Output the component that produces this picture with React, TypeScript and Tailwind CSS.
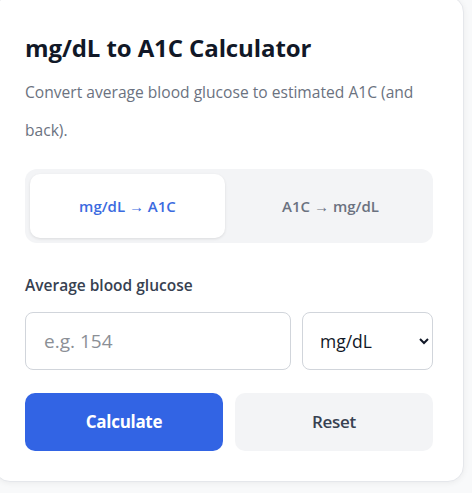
import { useState } from "react";

type Mode = "toA1c" | "toMgdl";

export default function App() {
  const [mode, setMode] = useState<Mode>("toA1c");
  const [value, setValue] = useState("");
  const [unit, setUnit] = useState("mg/dL");

  return (
    <div className="min-h-screen overflow-hidden bg-[#f8f9fa] font-['Open_Sans',sans-serif]">
      <div className="-ml-[6px] -mt-[4px] w-[470px] rounded-2xl border border-[#e5e7eb] bg-white px-[30px] pb-[30px] pt-[35px] shadow-[0_1px_6px_rgba(0,0,0,0.06)]">
        <h1 className="text-[24px] font-bold leading-[32px] tracking-[-0.1px] text-[#111827]">mg/dL to A1C Calculator</h1>
        <p className="mt-[9px] text-[15.6px] leading-[38px] text-[#6b7280]">
          Convert average blood glucose to estimated A1C (and back).
        </p>

        <div className="mt-[20px] grid grid-cols-2 gap-[8px] rounded-xl bg-[#f3f4f6] p-[5px]">
          <TabButton active={mode === "toA1c"} onClick={() => setMode("toA1c")}>
            mg/dL → A1C
          </TabButton>
          <TabButton active={mode === "toMgdl"} onClick={() => setMode("toMgdl")}>
            A1C → mg/dL
          </TabButton>
        </div>

        <label className="mt-[31px] block text-[15.5px] font-semibold leading-[22px] text-[#374151]">
          Average blood glucose
        </label>
        <div className="mt-[16px] flex gap-[11px]">
          <input
            value={value}
            onChange={(event) => setValue(event.target.value)}
            placeholder="e.g. 154"
            className="h-[58px] w-[266px] rounded-lg border border-[#d1d5db] bg-white px-[18px] text-[19px] text-[#111827] outline-none placeholder:text-[#8b8f96]"
          />
          <select
            value={unit}
            onChange={(event) => setUnit(event.target.value)}
            className="h-[58px] flex-1 rounded-lg border border-[#d1d5db] bg-white pl-[13px] pr-[4px] text-[17.5px] text-[#111827] outline-none"
          >
            <option>mg/dL</option>
            <option>mmol/L</option>
          </select>
        </div>

        <div className="mt-[23px] grid grid-cols-2 gap-[12px]">
          <button className="h-[58px] rounded-[10px] bg-[#3264e4] text-[17px] font-bold tracking-[-0.3px] text-white">
            Calculate
          </button>
          <button
            onClick={() => setValue("")}
            className="h-[58px] rounded-[10px] bg-[#f3f4f6] text-[17px] font-semibold tracking-[-0.3px] text-[#374151]"
          >
            Reset
          </button>
        </div>
      </div>
    </div>
  );
}

function TabButton({
  active,
  onClick,
  children,
}: {
  active: boolean;
  onClick: () => void;
  children: React.ReactNode;
}) {
  return (
    <button
      type="button"
      onClick={onClick}
      className={`h-[64px] rounded-[10px] text-[15px] font-semibold ${
        active ? "bg-white text-[#3b6be0] shadow-[0_1px_3px_rgba(0,0,0,0.1)]" : "text-[#6b7280]"
      }`}
    >
      {children}
    </button>
  );
}
